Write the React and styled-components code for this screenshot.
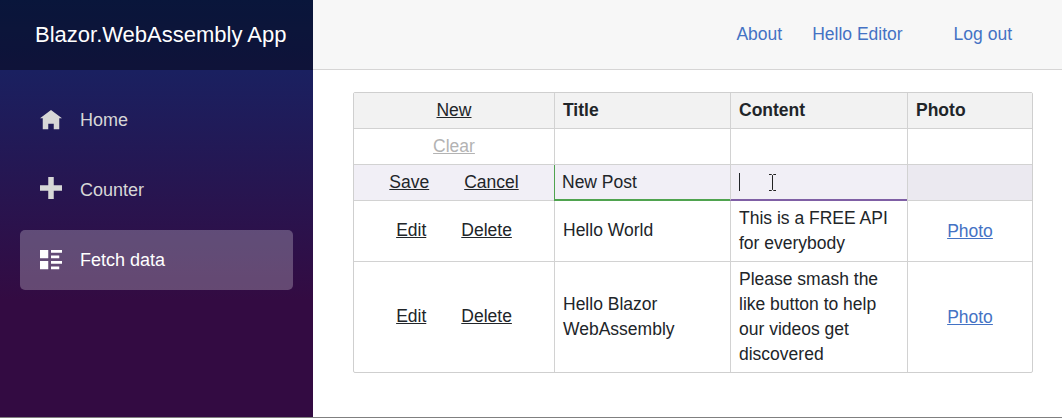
import React from "react";
import styled, { createGlobalStyle } from "styled-components";

const GlobalStyle = createGlobalStyle`
  html, body {
    margin: 0;
    padding: 0;
    background: #fff;
  }
  body {
    font-family: "Liberation Sans", Arial, sans-serif;
    font-size: 17.5px;
    color: #212529;
  }
`;

const Page = styled.div`
  display: flex;
  height: 417px;
  width: 1062px;
  border-bottom: 1px solid #808080;
  overflow: hidden;
`;

const Sidebar = styled.aside`
  width: 313px;
  flex: none;
  background-image: linear-gradient(180deg, #102563 0%, #1a2060 17%, #330b42 72%);
`;

const Brand = styled.div`
  height: 70px;
  display: flex;
  align-items: center;
  padding-left: 35px;
  background: rgba(0, 0, 0, 0.4);
  color: #fff;
  font-size: 22px;
`;

const Nav = styled.nav`
  display: flex;
  flex-direction: column;
  padding: 20px 20px 0;
  gap: 10px;
`;

const NavItem = styled.a`
  height: 60px;
  display: flex;
  align-items: center;
  gap: 18px;
  padding-left: 20px;
  border-radius: 5px;
  font-size: 18px;
  color: ${(p) => (p.$active ? "#fff" : "#d7d7d7")};
  background: ${(p) => (p.$active ? "rgba(255, 255, 255, 0.25)" : "transparent")};
`;

const NavIcon = styled.svg`
  width: 22px;
  height: 22px;
  fill: currentColor;
  flex: none;
  margin-top: ${(p) => p.$top || 0}px;
  margin-bottom: ${(p) => p.$bottom || 0}px;
`;

const Main = styled.main`
  flex: 1;
  min-width: 0;
`;

const TopBar = styled.header`
  height: 70px;
  box-sizing: border-box;
  display: flex;
  justify-content: flex-end;
  align-items: center;
  padding-right: 50px;
  background: #f7f7f7;
  border-bottom: 1px solid #d6d5d5;
`;

const TopLink = styled.a`
  color: #4472c4;
  font-size: 17.5px;
  margin-left: ${(p) => p.$gap}px;
`;

const Content = styled.div`
  padding: 22px 0 0 40px;
`;

const GridBox = styled.div`
  position: relative;
  width: 680px;
  box-sizing: border-box;
  border: 1px solid #cfcfcf;
  border-radius: 2px;
`;

const Grid = styled.table`
  width: 678px;
  table-layout: fixed;
  border-collapse: separate;
  border-spacing: 0;
`;

const HeadCell = styled.th`
  height: 35px;
  padding: 0 8px;
  text-align: left;
  font-weight: 700;
  background: #f2f2f2;
  border-bottom: 1px solid #d2d2d2;
  border-left: 1px solid #d2d2d2;
  &:first-child {
    border-left: none;
    text-align: center;
    font-weight: 400;
  }
`;

const Cell = styled.td`
  padding: 0 8px ${(p) => (p.$lift ? 2 : 0)}px;
  line-height: 25px;
  height: ${(p) => (p.$lift ? p.$h - 2 : p.$h)}px;
  text-align: ${(p) => p.$align || "left"};
  background: ${(p) => p.$bg || "transparent"};
  border-bottom: 1px solid #d2d2d2;
  border-left: 1px solid #d2d2d2;
  &:first-child {
    border-left: none;
  }
  tr:last-child > & {
    border-bottom: none;
  }
`;

const EditCell = styled(Cell)`
  position: relative;
  padding: 0 8px 0 7px;
  border-bottom: 2px solid ${(p) => p.$accent};
  ${(p) => p.$leftAccent && `border-left: 1px solid ${p.$accent};`}
`;

const Action = styled.a`
  color: ${(p) => (p.$disabled ? "#b3b3b3" : "#212529")};
  text-decoration: underline;
  & + & {
    margin-left: 35px;
  }
`;

const PhotoLink = styled.a`
  color: #4472c4;
  text-decoration: underline;
`;

const Caret = styled.span`
  display: block;
  width: 1px;
  height: 18px;
  margin-left: 1px;
  background: #212529;
`;

const Beam = styled.svg`
  position: absolute;
  left: 37px;
  top: 9px;
  width: 9px;
  height: 17px;
  fill: none;
  stroke: #222;
  stroke-width: 1;
`;

const rows = [
  { h: 60, title: "Hello World", liftTitle: true, content: "This is a FREE API for everybody" },
  {
    h: 110,
    title: "Hello Blazor WebAssembly",
    content: "Please smash the like button to help our videos get discovered",
  },
];

export default function App() {
  return (
    <>
      <GlobalStyle />
      <Page>
        <Sidebar>
          <Brand>Blazor.WebAssembly App</Brand>
          <Nav>
            <NavItem>
              <NavIcon viewBox="0 0 8 8" $top={2}>
                <path d="M4 0l-4 3h1v4h2v-2h2v2h2v-4.03l1 .03-4-3z" />
              </NavIcon>
              Home
            </NavItem>
            <NavItem>
              <NavIcon viewBox="0 0 8 8" $bottom={4}>
                <path d="M3 0v3h-3v2h3v3h2v-3h3v-2h-3v-3h-2z" />
              </NavIcon>
              Counter
            </NavItem>
            <NavItem $active>
              <NavIcon viewBox="0 0 8 8" $top={2}>
                <path d="M0 0v3h3v-3h-3zm4 0v1h4v-1h-4zm0 2v1h3v-1h-3zm-4 2v3h3v-3h-3zm4 0v1h4v-1h-4zm0 2v1h3v-1h-3z" />
              </NavIcon>
              Fetch data
            </NavItem>
          </Nav>
        </Sidebar>
        <Main>
          <TopBar>
            <TopLink>About</TopLink>
            <TopLink $gap={30}>Hello Editor</TopLink>
            <TopLink $gap={51}>Log out</TopLink>
          </TopBar>
          <Content>
            <GridBox>
              <Grid>
                <colgroup>
                  <col style={{ width: 200 }} />
                  <col style={{ width: 176 }} />
                  <col style={{ width: 177 }} />
                  <col />
                </colgroup>
                <thead>
                  <tr>
                    <HeadCell>
                      <Action>New</Action>
                    </HeadCell>
                    <HeadCell>Title</HeadCell>
                    <HeadCell>Content</HeadCell>
                    <HeadCell>Photo</HeadCell>
                  </tr>
                </thead>
                <tbody>
                  <tr>
                    <Cell $h={35} $align="center">
                      <Action $disabled>Clear</Action>
                    </Cell>
                    <Cell $h={35} />
                    <Cell $h={35} />
                    <Cell $h={35} />
                  </tr>
                  <tr>
                    <Cell $h={35} $align="center" $bg="#f1eff6">
                      <Action>Save</Action>
                      <Action>Cancel</Action>
                    </Cell>
                    <EditCell $h={34} $bg="#f1eff6" $accent="#4fa34f" $leftAccent>
                      New Post
                    </EditCell>
                    <EditCell $h={34} $bg="#f1eff6" $accent="#7f5fa5">
                      <Caret />
                      <Beam viewBox="0 0 9 17">
                        <path d="M1 .5h2.5l1 1 1-1H8M4.5 1.5v14M1 16.5h2.5l1-1 1 1H8" />
                      </Beam>
                    </EditCell>
                    <Cell $h={35} $bg="#ebe9f0" />
                  </tr>
                  {rows.map((row) => (
                    <tr key={row.title}>
                      <Cell $h={row.h} $align="center" $lift>
                        <Action>Edit</Action>
                        <Action>Delete</Action>
                      </Cell>
                      <Cell $h={row.h} $lift={row.liftTitle}>
                        {row.title}
                      </Cell>
                      <Cell $h={row.h}>{row.content}</Cell>
                      <Cell $h={row.h} $align="center">
                        <PhotoLink>Photo</PhotoLink>
                      </Cell>
                    </tr>
                  ))}
                </tbody>
              </Grid>
            </GridBox>
          </Content>
        </Main>
      </Page>
    </>
  );
}
